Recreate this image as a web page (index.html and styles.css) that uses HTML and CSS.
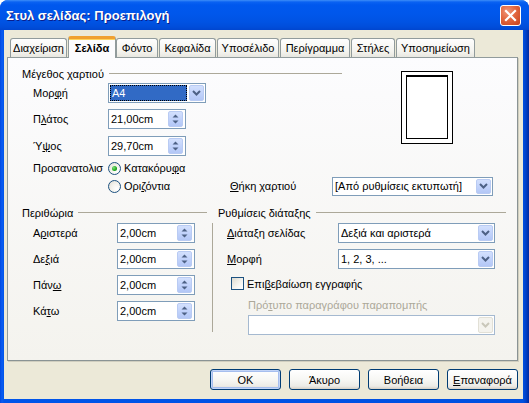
FILE: index.html
```html
<!DOCTYPE html>
<html lang="el">
<head>
<meta charset="utf-8">
<title>Στυλ σελίδας: Προεπιλογή</title>
<link rel="stylesheet" href="styles.css">
</head>
<body>
<div class="window">
  <div class="titlebar">
    <span class="title">Στυλ σελίδας: Προεπιλογή</span>
    <div class="close">
      <svg width="21" height="21" viewBox="0 0 21 21">
        <path d="M6 6 L15 15 M15 6 L6 15" stroke="#fff" stroke-width="2.2" stroke-linecap="square"/>
      </svg>
    </div>
  </div>
  <div class="client">
    <div class="tabs">
      <div class="tab w1">Διαχείριση</div>
      <div class="tab active">Σελίδα</div>
      <div class="tab w3">Φόντο</div>
      <div class="tab w4">Κεφαλίδα</div>
      <div class="tab w5">Υποσέλιδο</div>
      <div class="tab w6">Περίγραμμα</div>
      <div class="tab w7">Στήλες</div>
      <div class="tab w8">Υποσημείωση</div>
    </div>
    <div class="panel">
      <div class="block-a">
        <div class="paper-col">
          <div class="hdr"><span>Μέγεθος χαρτιού</span><i class="rule"></i></div>
          <div class="frow r1">
            <span class="lbl lw75">Μορ<u>φ</u>ή</span>
            <div class="combo cw98">
              <span class="sel">A4</span>
              <span class="dd"><svg width="9" height="6" viewBox="0 0 9 6"><path d="M1 1 L4.5 4.5 L8 1" fill="none" stroke="#4D6185" stroke-width="2"/></svg></span>
            </div>
          </div>
          <div class="frow r2">
            <span class="lbl lw75">Π<u>λ</u>άτος</span>
            <div class="spin"><span class="val">21,00cm</span><span class="sb"><svg width="9" height="12" viewBox="0 0 9 12"><path d="M1.5 4.5 L4.5 1.5 L7.5 4.5 Z M1.5 7.5 L4.5 10.5 L7.5 7.5 Z" fill="#4D6185"/></svg></span></div>
          </div>
          <div class="frow r3">
            <span class="lbl lw75">Ύ<u>ψ</u>ος</span>
            <div class="spin"><span class="val">29,70cm</span><span class="sb"><svg width="9" height="12" viewBox="0 0 9 12"><path d="M1.5 4.5 L4.5 1.5 L7.5 4.5 Z M1.5 7.5 L4.5 10.5 L7.5 7.5 Z" fill="#4D6185"/></svg></span></div>
          </div>
          <div class="rrow">
            <span class="lbl lw75">Προσανατολισ</span>
            <span class="radio on"><i></i></span>
            <span class="rtext">Κατακόρυ<u>φ</u>α</span>
          </div>
        </div>
        <div class="preview"><div class="page"></div></div>
      </div>
      <div class="block-b">
        <span class="lbl lw75"></span>
        <div class="rgroup">
          <span class="radio"></span>
          <span class="rtext">Ορι<u>ζ</u>όντια</span>
        </div>
        <span class="lbl lw102"><u>Θ</u>ήκη χαρτιού</span>
        <div class="combo cw161 short">
          <span class="val">[Από ρυθμίσεις εκτυπωτή]</span>
          <span class="dd"><svg width="9" height="6" viewBox="0 0 9 6"><path d="M1 1 L4.5 4.5 L8 1" fill="none" stroke="#4D6185" stroke-width="2"/></svg></span>
        </div>
      </div>
      <div class="block-c">
        <div class="margins">
          <div class="hdr mh"><span>Περιθώρια</span><i class="rule"></i></div>
          <div class="mrow first">
            <span class="lbl lw84">Α<u>ρ</u>ιστερά</span>
            <div class="spin"><span class="val">2,00cm</span><span class="sb"><svg width="9" height="12" viewBox="0 0 9 12"><path d="M1.5 4.5 L4.5 1.5 L7.5 4.5 Z M1.5 7.5 L4.5 10.5 L7.5 7.5 Z" fill="#4D6185"/></svg></span></div>
          </div>
          <div class="mrow">
            <span class="lbl lw84">Δε<u>ξ</u>ιά</span>
            <div class="spin"><span class="val">2,00cm</span><span class="sb"><svg width="9" height="12" viewBox="0 0 9 12"><path d="M1.5 4.5 L4.5 1.5 L7.5 4.5 Z M1.5 7.5 L4.5 10.5 L7.5 7.5 Z" fill="#4D6185"/></svg></span></div>
          </div>
          <div class="mrow">
            <span class="lbl lw84">Πάν<u>ω</u></span>
            <div class="spin"><span class="val">2,00cm</span><span class="sb"><svg width="9" height="12" viewBox="0 0 9 12"><path d="M1.5 4.5 L4.5 1.5 L7.5 4.5 Z M1.5 7.5 L4.5 10.5 L7.5 7.5 Z" fill="#4D6185"/></svg></span></div>
          </div>
          <div class="mrow">
            <span class="lbl lw84">Κά<u>τ</u>ω</span>
            <div class="spin"><span class="val">2,00cm</span><span class="sb"><svg width="9" height="12" viewBox="0 0 9 12"><path d="M1.5 4.5 L4.5 1.5 L7.5 4.5 Z M1.5 7.5 L4.5 10.5 L7.5 7.5 Z" fill="#4D6185"/></svg></span></div>
          </div>
        </div>
        <div class="layout">
          <div class="hdr lh"><span>Ρυθμίσεις διάταξης</span><i class="rule"></i></div>
          <div class="lbody">
            <div class="lrow first">
              <span class="lbl lw111"><u>Δ</u>ιάταξη σελίδας</span>
              <div class="combo cw157">
                <span class="val">Δεξιά και αριστερά</span>
                <span class="dd"><svg width="9" height="6" viewBox="0 0 9 6"><path d="M1 1 L4.5 4.5 L8 1" fill="none" stroke="#4D6185" stroke-width="2"/></svg></span>
              </div>
            </div>
            <div class="lrow">
              <span class="lbl lw111"><u>Μ</u>ορφή</span>
              <div class="combo cw157">
                <span class="val">1, 2, 3, ...</span>
                <span class="dd"><svg width="9" height="6" viewBox="0 0 9 6"><path d="M1 1 L4.5 4.5 L8 1" fill="none" stroke="#4D6185" stroke-width="2"/></svg></span>
              </div>
            </div>
            <div class="crow">
              <span class="check"></span>
              <span class="ctext">Επι<u>β</u>εβαίωση εγγραφής</span>
            </div>
            <div class="glabel">Πρό<u>τ</u>υπο παραγράφου παραπομπής</div>
            <div class="combo disabled cw247">
              <span class="val"></span>
              <span class="dd"><svg width="9" height="6" viewBox="0 0 9 6"><path d="M1 1 L4.5 4.5 L8 1" fill="none" stroke="#C9C7BA" stroke-width="2"/></svg></span>
            </div>
          </div>
        </div>
      </div>
    </div>
    <div class="buttons">
      <div class="btn default">OK</div>
      <div class="btn">Άκυρο</div>
      <div class="btn">Βοήθεια</div>
      <div class="btn"><u>Ε</u>παναφορά</div>
    </div>
  </div>
</div>
</body>
</html>
```
FILE: styles.css
```css
* { box-sizing: border-box; }
html, body { margin: 0; padding: 0; background: #fff; }
body {
  font-family: "Liberation Sans", Arial, sans-serif;
  font-size: 11px;
  color: #000;
}
u { text-decoration: underline; text-underline-offset: 1px; }

.window {
  width: 529px;
  height: 403px;
  display: flex;
  flex-direction: column;
  background: linear-gradient(to right, #0048E0 0, #0A5CF2 2px, #0055EA 4px, #0050E0 523px, #0040C8 526px, #002A9E 529px);
  border-radius: 8px 8px 0 0;
  overflow: hidden;
}

.titlebar {
  height: 30px;
  flex: none;
  display: flex;
  align-items: center;
  justify-content: space-between;
  padding: 0 8px 0 6px;
  background: linear-gradient(#3D8EF8 0, #0A62F2 2px, #0058EE 5px, #0057EB 14px, #0053E3 22px, #004DDA 27px, #0046CF 30px);
}
.title {
  color: #fff;
  font-family: "Liberation Sans", Arial, sans-serif;
  font-weight: bold;
  font-size: 13px;
  text-shadow: 1px 1px 0 #0A1E8C;
  margin-top: 1px;
}
.close {
  width: 21px;
  height: 21px;
  border: 1px solid #fff;
  border-radius: 3px;
  background: radial-gradient(circle at 35% 30%, #F0967A 0, #E2673F 45%, #C6401C 100%);
  display: flex;
  margin-top: 1px;
}
.close svg { display: block; margin: -1px; }

.client {
  flex: 1;
  margin: 0 6px 4px 4px;
  background: #ECE9D8;
  display: flex;
  flex-direction: column;
}

.tabs {
  display: flex;
  align-items: flex-end;
  height: 27px;
  padding: 6px 0 0 6px;
}
.tab {
  height: 19px;
  display: flex;
  align-items: center;
  justify-content: center;
  border: 1px solid #919B9C;
  border-bottom: none;
  border-radius: 3px 3px 0 0;
  background: linear-gradient(#FEFEFE, #F4F3EE 70%, #E8E7E0);
  white-space: nowrap;
  flex: none;
}
.w1 { width: 57px; }
.w3 { width: 42px; }
.w4 { width: 57px; margin-left: 1px; }
.w5 { width: 62px; margin-left: 1px; }
.w6 { width: 70px; margin-left: 1px; }
.w7 { width: 44px; margin-left: 1px; }
.w8 { width: 79px; margin-left: 1px; }
.tab.active {
  width: 48px;
  height: 22px;
  font-weight: bold;
  margin: 0 0 -1px 1px;
  position: relative;
  z-index: 2;
  background: #FCFCFE;
  border-top: 3px solid #F0A030;
  box-shadow: inset 0 1px 0 #FFD35C;
  padding-bottom: 2px;
}

.panel {
  margin: 0 5px 0 3px;
  height: 304px;
  border: 1px solid #919B9C;
  border-right-color: #8A9394;
  border-bottom-color: #8A9394;
  background: linear-gradient(#FCFCFE, #F4F3EE);
  padding: 9px 0 0 14px;
  position: relative;
  z-index: 1;
  box-shadow: 1px 1px 0 #D0CEBF;
}

.hdr {
  display: flex;
  align-items: center;
  height: 13px;
  white-space: nowrap;
}
.hdr .rule {
  flex: 1;
  height: 1px;
  background: #ACA899;
  margin-left: 5px;
}

.lbl { display: inline-block; flex: none; white-space: nowrap; margin-left: 11px; }
.lw75 { width: 75px; }
.lw84 { width: 84px; }
.lw102 { width: 102px; margin-left: 0; }
.lw111 { width: 111px; margin-left: 0; }

.block-a { display: flex; }
.paper-col { width: 320px; }
.frow { display: flex; align-items: center; height: 20px; }
.r1 { margin-top: 3px; }
.r2 { margin-top: 6px; }
.r3 { margin-top: 7px; }
.rrow { display: flex; align-items: center; height: 18px; margin-top: 3px; }

.preview {
  margin: 4px 0 0 59px;
  width: 52px;
  height: 73px;
  border: 1px solid #000;
  background: #fff;
  padding: 3px 4px;
}
.page {
  width: 42px;
  height: 64px;
  border: 1px solid #000;
  border-top-width: 2px;
  background: #fff;
}

.combo, .spin {
  height: 20px;
  border: 1px solid #7F9DB9;
  background: #fff;
  display: flex;
  align-items: center;
  justify-content: space-between;
  flex: none;
}
.combo.short { height: 19px; }
.combo.short .dd { height: 15px; }
.cw98 { width: 98px; }
.cw161 { width: 161px; }
.cw157 { width: 157px; }
.cw247 { width: 247px; }
.spin { width: 78px; }
.val { padding-left: 2px; white-space: nowrap; }
.sel {
  margin-left: 1px;
  width: 77px;
  height: 16px;
  background: #316AC5;
  color: #fff;
  outline: 1px dotted #000;
  outline-offset: -1px;
  padding-left: 2px;
  line-height: 16px;
}
.dd, .sb {
  width: 15px;
  height: 16px;
  margin-right: 1px;
  border: 1px solid #B9CBF3;
  border-radius: 2px;
  background: linear-gradient(#D3E0FD, #C2D3FB 50%, #B3C7F6);
  display: flex;
  align-items: center;
  justify-content: center;
}
.sb { margin-right: 2px; }
.combo.disabled { border-color: #A5B9D0; }
.combo.disabled .dd {
  background: #F4F3EE;
  border-color: #E2E0D6;
}

.radio {
  width: 13px;
  height: 13px;
  border-radius: 50%;
  border: 1px solid #1C5180;
  background: radial-gradient(circle at 70% 70%, #fff 0, #F3F2EC 50%, #DCDAD0 100%);
  display: flex;
  align-items: center;
  justify-content: center;
  flex: none;
}
.radio i {
  width: 5px;
  height: 5px;
  border-radius: 50%;
  background: radial-gradient(circle at 35% 35%, #7FE07A, #1FA61E 60%, #0B850A);
}
.rtext { margin-left: 3px; white-space: nowrap; }

.block-b { display: flex; align-items: center; height: 18px; }
.rgroup { display: flex; align-items: center; width: 122px; flex: none; }

.block-c { display: flex; margin-top: 11px; }
.margins { width: 190px; flex: none; }
.mh { margin-right: 5px; }
.mrow { display: flex; align-items: center; height: 20px; margin-top: 6px; }
.mrow.first { margin-top: 4px; }

.layout { width: 294px; flex: none; }
.lh { padding-left: 6px; }
.lbody {
  margin-top: 5px;
  height: 109px;
  border-left: 1px solid #ACA899;
  padding-left: 14px;
}
.lrow { display: flex; align-items: center; height: 20px; margin-top: 6px; }
.lrow.first { margin-top: -1px; }
.crow { display: flex; align-items: center; height: 13px; margin-top: 8px; padding-left: 4px; }
.check {
  width: 13px;
  height: 13px;
  border: 1px solid #1C5180;
  background: linear-gradient(135deg, #DCDAD0, #F6F5F1 60%, #fff);
  flex: none;
}
.ctext { margin-left: 3px; white-space: nowrap; }
.glabel { margin-top: 9px; height: 13px; line-height: 13px; padding-left: 21px; color: #ACA899; white-space: nowrap; }
.lbody .combo.disabled { margin-top: 3px; margin-left: 21px; }

.buttons {
  display: flex;
  justify-content: flex-end;
  gap: 8px;
  margin-top: 8px;
  padding-right: 5px;
}
.btn {
  width: 71px;
  height: 21px;
  border: 1px solid #003C74;
  border-radius: 3px;
  background: linear-gradient(#FFFFFF, #F7F7F4 50%, #ECEBE6 85%, #D6D0C5);
  display: flex;
  align-items: center;
  justify-content: center;
  white-space: nowrap;
}
.btn.default {
  box-shadow: inset 0 0 0 1px #C2D4F7, inset 0 0 0 2px #A6BEEE;
}
```
